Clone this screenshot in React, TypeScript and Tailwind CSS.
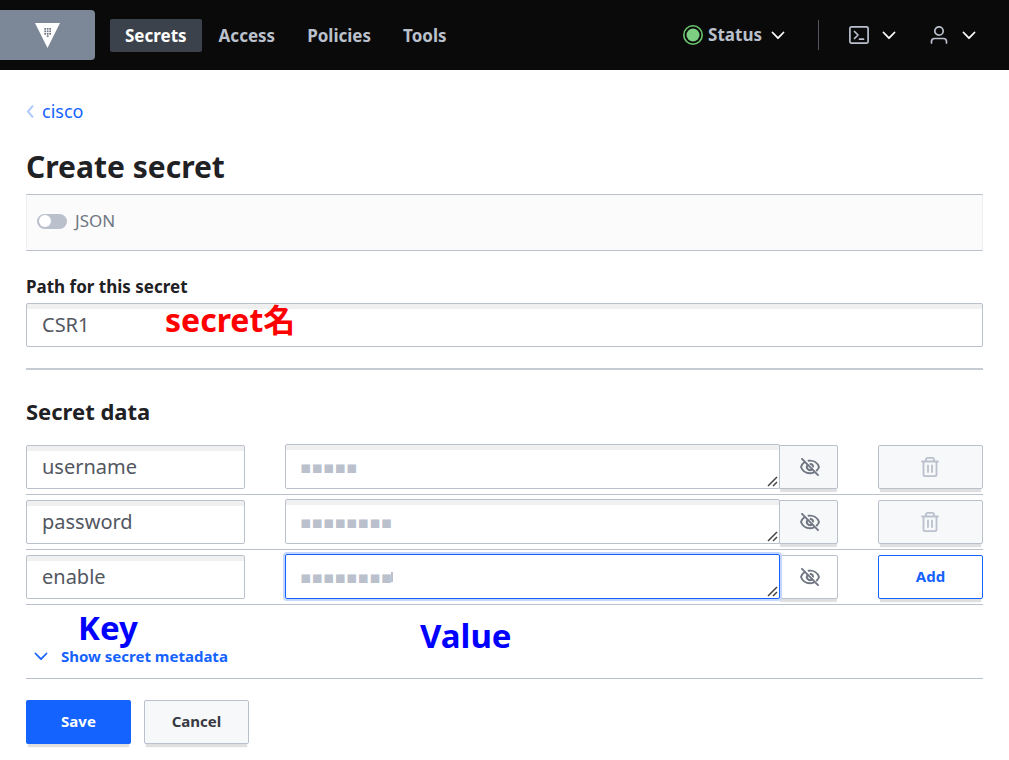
import type { ReactNode } from "react";

const LINE = "border-[#bac1cc]";

function Chevron({ className = "" }: { className?: string }) {
  return (
    <svg className={className} width="14" height="9" viewBox="0 0 14 9" fill="none" stroke="currentColor" strokeWidth="1.800" strokeLinecap="round" strokeLinejoin="round" aria-hidden="true">
      <path d="M1.500 1.500 7 7.200l5.500-5.700" />
    </svg>
  );
}

function VaultLogo() {
  return (
    <svg width="25" height="25" viewBox="0 0 25 25" aria-hidden="true">
      <path d="M0 0h25L12.500 25z" fill="#fff" />
      <g fill="#6f7682">
        {[5, 7.5, 10].map((y) =>
          [9.3, 11.8, 14.3].map((x) => <rect key={`${x}-${y}`} x={x} y={y} width="1.700" height="1.700" />)
        )}
        <rect x="11.800" y="12.300" width="1.700" height="1.700" />
      </g>
    </svg>
  );
}

function StatusDot() {
  return (
    <svg width="20" height="20" viewBox="0 0 20 20" aria-hidden="true">
      <circle cx="10" cy="10" r="9.200" fill="none" stroke="#6dc76d" strokeWidth="1.600" />
      <circle cx="10" cy="10" r="6.500" fill="#7dce82" />
    </svg>
  );
}

function TerminalIcon() {
  return (
    <svg width="20" height="18" viewBox="0 0 20 18" fill="none" stroke="currentColor" strokeWidth="1.700" strokeLinecap="round" strokeLinejoin="round" aria-hidden="true">
      <rect x="0.900" y="0.900" width="18.200" height="16.200" rx="1.500" />
      <path d="M5.500 5.500 9 9l-3.500 3.500M10.500 13.200h4" />
    </svg>
  );
}

function UserIcon() {
  return (
    <svg width="18" height="18" viewBox="0 0 18 18" fill="none" stroke="currentColor" strokeWidth="1.700" strokeLinecap="round" aria-hidden="true">
      <circle cx="9" cy="5" r="4.200" />
      <path d="M1.500 17v-1.500a3 3 0 0 1 3-3h9a3 3 0 0 1 3 3V17" />
    </svg>
  );
}

function EyeOffIcon() {
  return (
    <svg width="20" height="18" viewBox="0 0 20 18" fill="none" stroke="currentColor" strokeWidth="1.900" strokeLinecap="round" strokeLinejoin="round" aria-hidden="true">
      <path d="M2 .9 18 17.100" />
      <path d="M8.500 2.700C13.500 2 17.600 4.800 19 9c-.5 1.400-1.200 2.500-2.200 3.500M4.400 4.200C2.800 5.300 1.600 7 1 9c1.500 4 5.200 6.300 9 6.300 1.300 0 2.500-.3 3.600-.7" />
      <path d="M7.500 7a3.200 3.200 0 0 0 4.700 4.300M10.500 6a3 3 0 0 1 2.600 2.600" />
    </svg>
  );
}

function TrashIcon() {
  return (
    <svg width="18" height="20" viewBox="0 0 18 20" fill="none" stroke="currentColor" strokeWidth="1.800" strokeLinecap="round" strokeLinejoin="round" aria-hidden="true">
      <path d="M1 4.500h16M2.500 4.500v13a1.600 1.600 0 0 0 1.600 1.600h9.800a1.600 1.600 0 0 0 1.600-1.600v-13M5 4.500V2.500A1.600 1.600 0 0 1 6.600.9h4.800A1.600 1.600 0 0 1 13 2.500v2M7 8.500v6.500M11 8.500v6.500" />
    </svg>
  );
}

function NavLink({ active = false, children }: { active?: boolean; children: ReactNode }) {
  return (
    <a href="#" className={`rounded-xs px-[15px] py-1 leading-[25px] ${active ? "bg-[#3b424c] text-white" : "text-[#bac1cc]"}`}>
      {children}
    </a>
  );
}

type Row = { name: string; mask: string; last?: boolean };

const rows: Row[] = [
  { name: "username", mask: "▪▪▪▪▪" },
  { name: "password", mask: "▪▪▪▪▪▪▪▪" },
  { name: "enable", mask: "▪▪▪▪▪▪▪▪", last: true },
];

function SecretRow({ name, mask, last = false }: Row) {
  return (
    <div className={`grid h-[55px] grid-cols-[219fr_553fr_105px] gap-10 border-b pb-[5px] ${LINE}`}>
      <input
        aria-label={`Key ${name}`}
        defaultValue={name}
        className={`mt-[5px] h-11 w-full min-w-0 rounded-xs border px-[15px] pb-px text-[20px] text-[#525761] shadow-[inset_0_5px_0_#f0f0f1] ${LINE}`}
      />
      <div className="flex">
        <div className="relative mt-1 h-[45px] flex-1">
          <textarea
            aria-label={`Value of ${name}`}
            rows={1}
            defaultValue={mask}
            className={`block h-full w-full resize-none overflow-hidden rounded-xs border px-[14px] py-[10px] font-['DejaVu_Sans',sans-serif] text-[17px] leading-6 text-[#bac1cc] outline-none ${
              last ? "border-[#1563ff] shadow-[0_0_0_2px_#c3d6ff]" : "border-[#bac1cc] shadow-[inset_0_5px_0_#f0f0f1]"
            }`}
          />
          {last && <span className="absolute top-[18px] left-[106px] h-[10px] w-[2px] bg-[#bac1cc]" />}
          <svg className="absolute right-[2px] bottom-[2px]" width="11" height="11" viewBox="0 0 11 11" stroke="#444" strokeWidth="1.500" aria-hidden="true">
            <path d="M1 10 10 1M6 10l4-4" />
          </svg>
        </div>
        <button
          type="button"
          aria-label={`Show value of ${name}`}
          className={`mt-[5px] -ml-px flex h-11 w-[59px] items-center justify-center rounded-r-xs border pl-[2px] text-[#6f7682] shadow-[0_4px_1px_-1px_#dfdfe1] ${LINE} ${last ? "bg-white" : "bg-[#f7f8fa]"}`}
        >
          <EyeOffIcon />
        </button>
      </div>
      <button
        type="button"
        aria-label={last ? "Add" : `Delete ${name}`}
        className={`mt-[5px] flex h-11 items-center justify-center rounded-xs border text-[15px] font-bold shadow-[0_5px_1px_-2px_#dfdfe1] ${
          last ? "border-[#1563ff] bg-white pb-[2px] text-[#1563ff]" : "border-[#bac1cc] bg-[#f7f8fa] pr-[2px] text-[#bac1cc]"
        }`}
      >
        {last ? "Add" : <TrashIcon />}
      </button>
    </div>
  );
}

export default function App() {
  return (
    <div className="relative min-h-screen bg-white font-['Noto_Sans','Noto_Sans_CJK_JP',sans-serif] text-[#1f2124]">
      <header className="flex h-[70px] items-center bg-[#0a0a0a] text-[17px] font-bold">
        <a href="#" aria-label="Vault home" className="flex h-[50px] w-[95px] items-center justify-center rounded-r-sm bg-[#7c8797]">
          <VaultLogo />
        </a>
        <nav className="ml-[15px] flex gap-[2px]">
          <NavLink active>Secrets</NavLink>
          <NavLink>Access</NavLink>
          <NavLink>Policies</NavLink>
          <NavLink>Tools</NavLink>
        </nav>
        <div className="ml-auto flex items-center pr-[33px] text-[#bac1cc]">
          <button type="button" className="flex items-center gap-[5px]">
            <StatusDot />
            <span>Status</span>
            <Chevron className="ml-1 text-white" />
          </button>
          <span className="mx-[30px] ml-[33px] h-[30px] w-px bg-[#525761]" />
          <button type="button" aria-label="Console" className="flex items-center gap-[13px]">
            <TerminalIcon />
            <Chevron className="text-white" />
          </button>
          <button type="button" aria-label="User menu" className="ml-[34px] flex items-center gap-[14px]">
            <UserIcon />
            <Chevron className="text-white" />
          </button>
        </div>
      </header>

      <main className="px-[26px] pt-[29px]">
        <a href="#" className="flex w-fit items-center gap-2 text-[18px] leading-6 text-[#1563ff]">
          <svg width="8" height="13" viewBox="0 0 8 13" fill="none" stroke="#b0caff" strokeWidth="2" aria-hidden="true">
            <path d="M7 .5 2 6.500l5 6" />
          </svg>
          cisco
        </a>
        <h1 className="mt-6 text-[30px] leading-10 font-bold">Create secret</h1>

        <div className="mt-[7px] flex h-[57px] items-center border-x border-y border-x-[#ebeef2] border-y-[#bac1cc] bg-[#fbfbfb] px-[10px] pb-[3px]">
          <label className="flex items-center gap-2 text-[17px] text-[#6f7682]">
            <input type="checkbox" className="peer sr-only" />
            <span className="flex h-[15px] w-[30px] items-center rounded-full bg-[#bac1cc] px-[2px]">
              <span className="h-3 w-3 rounded-full bg-white" />
            </span>
            JSON
          </label>
        </div>

        <label htmlFor="path" className="mt-6 block text-[17px] leading-6 font-bold">
          Path for this secret
        </label>
        <input
          id="path"
          defaultValue="CSR1"
          className={`mt-1 block h-11 w-full rounded-xs border px-[15px] pb-px text-[20px] text-[#525761] shadow-[inset_0_5px_0_#f0f0f1] ${LINE}`}
        />
        <hr className="mt-[21px] border-t-2 border-[#c6cbd4]" />

        <h2 className="mt-[27px] mb-[15px] text-[22px] leading-7 font-bold">Secret data</h2>
        {rows.map((row) => (
          <SecretRow key={row.name} {...row} />
        ))}

        <div className={`flex h-[74px] items-end border-b pb-[10px] ${LINE}`}>
          <button type="button" className="flex items-center gap-[13px] pl-2 text-[15px] leading-6 font-bold text-[#1563ff]">
            <Chevron />
            Show secret metadata
          </button>
        </div>

        <div className="mt-[21px] mb-4 flex gap-[13px] text-[15px] font-bold">
          <button type="submit" className="h-11 w-[105px] rounded-xs bg-[#1563ff] pb-[2px] text-white shadow-[0_5px_1px_-2px_#dfdfe1]">
            Save
          </button>
          <button type="button" className={`h-11 w-[105px] rounded-xs border bg-[#f7f8fa] pb-[2px] text-[#373a42] shadow-[0_5px_1px_-2px_#dfdfe1] ${LINE}`}>
            Cancel
          </button>
        </div>
      </main>

      <span className="absolute top-[300px] left-[165px] text-[32px] leading-10 font-bold text-[#ff0000]">secret名</span>
      <span className="absolute top-[608px] left-[78px] text-[33px] leading-10 font-bold text-[#0000ff]">Key</span>
      <span className="absolute top-[616px] left-[420px] text-[33px] leading-10 font-bold text-[#0000ff]">Value</span>
    </div>
  );
}
